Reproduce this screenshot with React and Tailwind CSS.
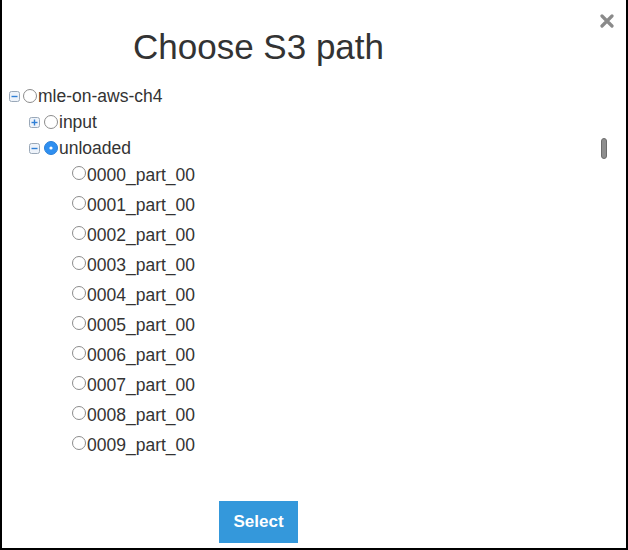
const files = [
  '0000_part_00',
  '0001_part_00',
  '0002_part_00',
  '0003_part_00',
  '0004_part_00',
  '0005_part_00',
  '0006_part_00',
  '0007_part_00',
  '0008_part_00',
  '0009_part_00',
];

function Toggle({ open }) {
  return (
    <svg width="11" height="11" viewBox="0 0 11 11" className="shrink-0">
      <rect x="0.5" y="0.5" width="10" height="10" rx="2" fill="#eef3fa" stroke="#9aa8b8" />
      <path d="M2.5 5.5h6" stroke="#2f7fd6" strokeWidth="1.4" />
      {!open && <path d="M5.5 2.5v6" stroke="#2f7fd6" strokeWidth="1.4" />}
    </svg>
  );
}

function Radio({ checked }) {
  if (checked) {
    return (
      <svg width="14" height="14" viewBox="0 0 14 14" className="shrink-0 block">
        <circle cx="7" cy="7" r="6.5" fill="#2f8ff0" stroke="#2a7fd8" />
        <circle cx="7" cy="7" r="1.6" fill="#ffffff" />
      </svg>
    );
  }
  return <span className="block w-[14px] h-[14px] shrink-0 rounded-full border border-[#8c8c8c] bg-white" />;
}

export default function App() {
  return (
    <div
      className="relative w-[628px] h-[550px] bg-white border-x-2 border-b-2 border-black text-[#333333] flex flex-col"
      style={{ fontFamily: '"Liberation Sans", Arial, sans-serif' }}
    >
      {/* close */}
      <svg className="absolute top-[14px] right-[12px]" width="14" height="14" viewBox="0 0 14 14">
        <path d="M2 2L12 12M12 2L2 12" stroke="#8a8a8a" strokeWidth="3.2" strokeLinecap="round" />
      </svg>

      {/* scrollbar thumb */}
      <div className="absolute left-[599px] top-[138px] w-[6px] h-[21px] rounded-full bg-[#8d8d8d] border border-[#6c6c6c]" />

      <h2 className="w-[513px] pt-[27px] text-center text-[35px] leading-[40px] font-normal">
        Choose S3 path
      </h2>

      <div className="mt-[16px] text-[17.5px]">
        <div className="h-[26px] flex items-center pl-[7px]">
          <Toggle open />
          <span className="ml-[3px] flex"><Radio /></span>
          <span className="ml-[1px]">mle-on-aws-ch4</span>
        </div>
        <div className="h-[26px] flex items-center pl-[27px]">
          <Toggle />
          <span className="ml-[4px] flex"><Radio /></span>
          <span className="ml-[1px]">input</span>
        </div>
        <div className="h-[26px] flex items-center pl-[27px]">
          <Toggle open />
          <span className="ml-[4px] flex"><Radio checked /></span>
          <span className="ml-[1px]">unloaded</span>
        </div>
        <div className="-mt-[1px]">
          {files.map((f) => (
            <div key={f} className="h-[30px] flex items-center pl-[70px]">
              <span className="-mt-[4px] flex"><Radio /></span>
              <span className="ml-[1px]">{f}</span>
            </div>
          ))}
        </div>
      </div>

      <div className="w-[513px] mt-[41px] flex justify-center">
        <button className="w-[79px] h-[42px] bg-[#3498db] text-white font-bold text-[17px]">
          Select
        </button>
      </div>
    </div>
  );
}
